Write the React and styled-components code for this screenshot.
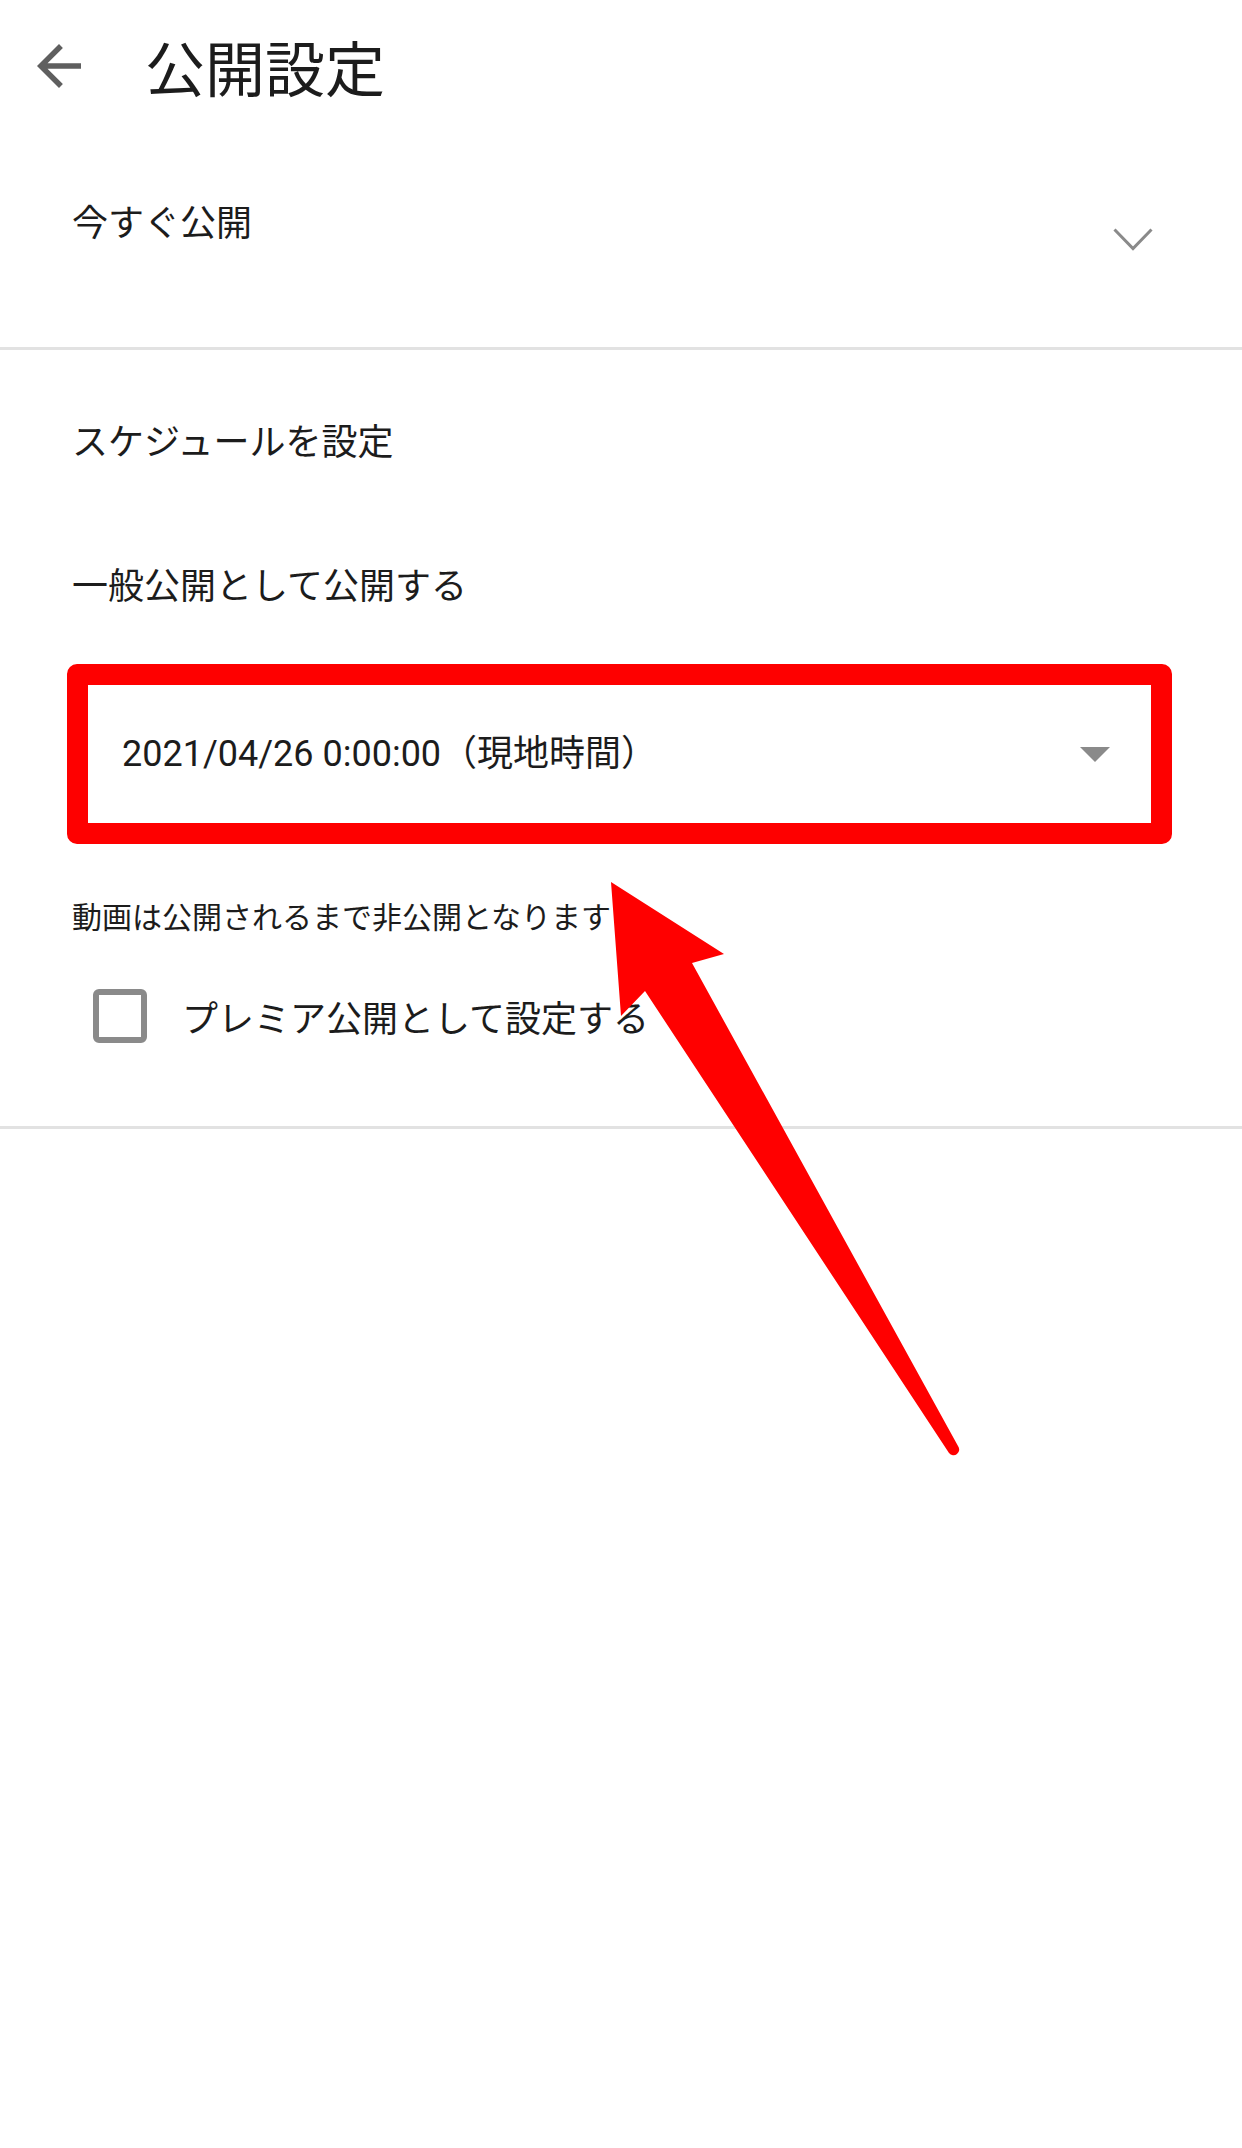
import React from 'react';
import styled, { createGlobalStyle } from 'styled-components';

const GlobalStyle = createGlobalStyle`
  body {
    margin: 0;
    background: #ffffff;
    font-family: Roboto, "Noto Sans CJK JP", sans-serif;
    color: #1c1c1c;
  }
`;

function BackIcon() {
  return (
    <svg width="66" height="66" viewBox="0 0 24 24" fill="#5f5f5f">
      <path d="M20 11H7.83l5.59-5.59L12 4l-8 8 8 8 1.41-1.41L7.83 13H20v-2z" />
    </svg>
  );
}

function ChevronIcon() {
  return (
    <svg width="40" height="23" viewBox="0 0 40 23">
      <polyline
        points="1.5,1.5 20,20.5 38.5,1.5"
        fill="none"
        stroke="#8a8a8a"
        strokeWidth="3"
      />
    </svg>
  );
}

function App() {
  return (
    <Page>
      <GlobalStyle />
      <Header>
        <BackButton aria-label="戻る">
          <BackIcon />
        </BackButton>
        <Title>公開設定</Title>
      </Header>

      <PublishNowRow>
        <RowLabel>今すぐ公開</RowLabel>
        <ChevronIcon />
      </PublishNowRow>
      <Divider />

      <ScheduleSection>
        <SectionLabel $gap={64}>スケジュールを設定</SectionLabel>
        <SectionLabel $gap={94}>一般公開として公開する</SectionLabel>
        <DateField>
          <DateText>2021/04/26 0:00:00（現地時間）</DateText>
          <DropTriangle />
        </DateField>
        <HelperText>動画は公開されるまで非公開となります</HelperText>
        <CheckboxRow>
          <CheckBox />
          <CheckLabel>プレミア公開として設定する</CheckLabel>
        </CheckboxRow>
      </ScheduleSection>
      <Divider />

      {/* annotation arrow drawn over the form */}
      <ArrowOverlay width="1242" height="1500" viewBox="0 0 1242 1500">
        <path
          d="M611 882 L724 954 L692 963 L958 1446 A5 5 0 0 1 949 1453 L645 991 L621 1016 Z"
          fill="#ff0000"
        />
      </ArrowOverlay>
    </Page>
  );
}

const Page = styled.div`
  position: relative;
  width: 1242px;
  min-height: 2148px;
  background: #ffffff;
  overflow: hidden;
`;

const Header = styled.header`
  height: 132px;
  display: flex;
  align-items: center;
  padding-left: 26px;
`;

const BackButton = styled.div`
  width: 66px;
  height: 66px;
  display: flex;
`;

const Title = styled.h1`
  margin: 0 0 0 53px;
  font-family: "Noto Sans CJK JP", sans-serif;
  font-size: 60px;
  font-weight: 400;
  line-height: 80px;
  color: #1c1c1c;
`;

const PublishNowRow = styled.div`
  height: 215px;
  display: flex;
  align-items: center;
  justify-content: space-between;
  padding: 0 89px 0 72px;
`;

const RowLabel = styled.span`
  font-family: "Noto Sans CJK JP", sans-serif;
  font-size: 36px;
  line-height: 50px;
  margin-bottom: 40px;
`;

const Divider = styled.hr`
  margin: 0;
  border: none;
  height: 3px;
  background: #e2e2e2;
`;

const ScheduleSection = styled.section`
  display: flex;
  flex-direction: column;
  padding: 0 70px 70px 72px;
`;

const SectionLabel = styled.div`
  margin-top: ${(p) => p.$gap}px;
  font-family: "Noto Sans CJK JP", sans-serif;
  font-size: 36px;
  line-height: 50px;
`;

const DateField = styled.div`
  margin: 56px 0 0 -5px;
  height: 180px;
  box-sizing: border-box;
  border: 21px solid #fe0000;
  border-radius: 10px;
  display: flex;
  align-items: center;
  justify-content: space-between;
  padding: 0 41px 0 34px;
`;

const DateText = styled.span`
  font-size: 36px;
  line-height: 50px;
  color: #1c1c1c;
`;

const DropTriangle = styled.span`
  width: 0;
  height: 0;
  border-left: 15px solid transparent;
  border-right: 15px solid transparent;
  border-top: 15px solid #8a8a8a;
`;

const HelperText = styled.div`
  margin-top: 51px;
  font-family: "Noto Sans CJK JP", sans-serif;
  font-size: 30px;
  line-height: 40px;
`;

const CheckboxRow = styled.label`
  margin-top: 41px;
  height: 80px;
  display: flex;
  align-items: center;
  gap: 35px;
  padding-left: 21px;
`;

const CheckBox = styled.span`
  width: 54px;
  height: 54px;
  box-sizing: border-box;
  border: 6px solid #8a8a8a;
  border-radius: 6px;
`;

const CheckLabel = styled.span`
  font-family: "Noto Sans CJK JP", sans-serif;
  font-size: 36px;
  line-height: 50px;
`;

const ArrowOverlay = styled.svg`
  position: absolute;
  top: 0;
  left: 0;
  pointer-events: none;
`;

export default App;
